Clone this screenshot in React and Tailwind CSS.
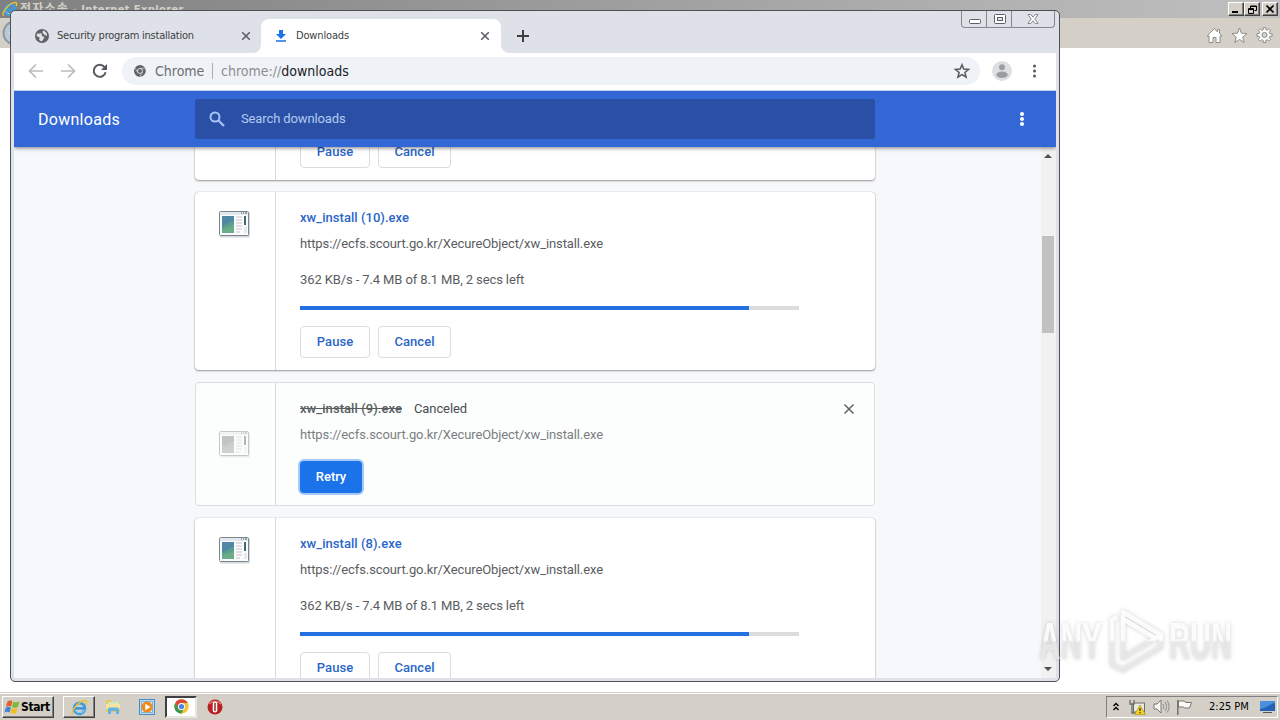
import React from "react";

const CELL = "font-['DejaVu_Sans_Condensed','DejaVu_Sans',sans-serif]";

function FileIcon({ faded }) {
  return (
    <svg width="32" height="28" viewBox="0 0 32 28" className={faded ? "opacity-45 grayscale" : ""}>
      <rect x="2" y="2.500" width="30" height="25" rx="1" fill="#d5d8da" />
      <rect x="1.500" y="1.500" width="29" height="24" rx="1" fill="#fbfcfd" stroke="#7b868e" />
      <rect x="2" y="2" width="28" height="3" fill="#e3e8ec" />
      <path d="M23 3h1M25 3h1M27 3h2" stroke="#41505c" />
      <rect x="4" y="6" width="12" height="17" fill="#59a08c" />
      <path d="M4 6h12v5c-4 0-6 4-12 5z" fill="#5088a6" />
      <path d="M4 20c4-3 8-2 12-6v9H4z" fill="#68ad88" />
      <path d="M18 7h6M18 10h6M18 13h6M18 16h6M18 19h6M18 22h4" stroke="#cdbfc5" />
      <path d="M27 6v9" stroke="#3c6b6b" strokeWidth="2" />
      <path d="M26 17h3v6h-3z" fill="#e6eaec" />
    </svg>
  );
}

function Button({ children, width }) {
  return (
    <div className={`${width} flex h-8 shrink-0 items-center justify-center rounded border border-[#dadce0] bg-white text-[13px] font-medium text-[#2a66c8]`}>
      <span className="tracking-[0.05px]">{children}</span>
    </div>
  );
}

function Actions() {
  return (
    <div className="flex gap-2">
      <Button width="w-[70px]">Pause</Button>
      <Button width="w-[73px]">Cancel</Button>
    </div>
  );
}

const URL_TEXT = "https://ecfs.scourt.go.kr/XecureObject/xw_install.exe";

function ActiveCard({ name }) {
  return (
    <div className="flex h-[178px] shrink-0 rounded bg-white shadow-[0_1px_2px_rgba(60,64,67,0.5),0_0_1px_rgba(60,64,67,0.4)]">
      <div className="flex w-[81px] justify-center border-r border-[#d8dadd] pt-[18px] pr-[2px]">
        <FileIcon />
      </div>
      <div className="flex flex-1 flex-col pt-4 pl-6 text-[13px] leading-5 text-[#5a5d61]">
        <div className="font-medium text-[#2a66c8]"><span className="tracking-[0.045px]">{name}</span></div>
        <div className="mt-1.5"><span className="tracking-[-0.104px]">{URL_TEXT}</span></div>
        <div className="mt-4"><span className="tracking-[-0.115px]">362 KB/s - 7.4 MB of 8.1 MB, 2 secs left</span></div>
        <div className="mt-4 mb-4 h-1 w-[499px] bg-[#dcdcdc]">
          <div className="h-1 w-[449px] bg-[#2470e0]" />
        </div>
        <Actions />
      </div>
    </div>
  );
}

function CanceledCard() {
  return (
    <div className="flex h-[124px] shrink-0 rounded border border-[#dadee0] bg-[#fbfefd]">
      <div className="flex w-20 items-center justify-center border-r border-[#d8dadd] pr-1">
        <FileIcon faded />
      </div>
      <div className="flex flex-1 flex-col pt-4 pl-6 text-[13px] leading-5 text-[#7b7e81]">
        <div className="flex justify-between pr-[19px]">
          <div className="flex gap-3 text-[#5a5d61]">
            <span className="font-medium tracking-[0.065px] line-through">xw_install (9).exe</span>
            <span className="tracking-[-0.1px] text-[#4a4d50]">Canceled</span>
          </div>
          <svg width="12" height="20" viewBox="0 0 12 20"><path d="M1.500 5.500l9 9M10.500 5.500l-9 9" stroke="#5f6368" strokeWidth="1.500" /></svg>
        </div>
        <div className="mt-1.5"><span className="tracking-[-0.104px]">{URL_TEXT}</span></div>
        <div className="mt-4 flex h-8 w-[62px] items-center justify-center rounded bg-[#1a73e8] font-medium text-white shadow-[0_0_0_2px_#a6caf7]">
          <span className="tracking-[-0.05px]">Retry</span>
        </div>
      </div>
    </div>
  );
}

function CloseX() {
  return <svg width="10" height="10" viewBox="0 0 10 10"><path d="M1.200 1.200l7.600 7.600M8.800 1.200l-7.600 7.600" stroke="#5c6066" strokeWidth="1.600" /></svg>;
}

function ChromeLogo({ size, mono }) {
  const c = mono ? ["#5f6368", "#5f6368", "#5f6368", "#5f6368", "#eef1f5"] : ["#d9483b", "#f3c431", "#3a9a55", "#4a86e8", "#fff"];
  return (
    <svg width={size} height={size} viewBox="0 0 24 24">
      <circle cx="12" cy="12" r="11.500" fill={c[1]} />
      <path d="M2 6.300A11.500 11.500 0 0 1 22 6.300H12A6 6 0 0 0 6.800 15z" fill={c[0]} />
      <path d="M2 6.300L7 15a6 6 0 0 0 8 2.200L11.500 23.500A11.500 11.500 0 0 1 2 6.300z" fill={c[2]} />
      {mono && <path d="M12 6.500h10M7.200 14.800L2.200 6.300M16.800 14.800L11.500 23.500" stroke="#eef1f5" strokeWidth="1.200" />}
      <circle cx="12" cy="12" r="5.600" fill={c[4]} />
      <circle cx="12" cy="12" r="4.200" fill={c[3]} />
    </svg>
  );
}

function IELogo({ size }) {
  return (
    <svg width={size} height={size} viewBox="0 0 20 20">
      <path d="M16 13A6.300 6.300 0 1 1 16.300 11H5.500" fill="none" stroke="#3d9be0" strokeWidth="3.400" />
      <path d="M15.700 13A6 6 0 0 1 5 13" fill="none" stroke="#8ad0f5" strokeWidth="1.200" />
      <path d="M2 18.500C-1 15 8 3.500 15 2c4-.8 4 2 2.500 4.500" fill="none" stroke="#eec331" strokeWidth="1.700" />
    </svg>
  );
}

function TabStrip() {
  return (
    <div className="flex h-[42px] shrink-0 items-end">
      <div className="flex h-[34px] w-[247px] items-center pl-[21px]">
        <svg width="14" height="14" viewBox="0 0 14 14">
          <circle cx="7" cy="7" r="7" fill="#5f6368" />
          <path d="M2 4.500C4 5 4.500 4 6.500 4.500L7 7 9.500 8 8.500 10 7 12.300C4 12 3.500 9.500 5 9L1.700 7z M8 1.500L7.500 3.500 9 5.500l3 1.500C12.500 4.500 10.500 2.200 8 1.500z" fill="#dfe2e8" />
        </svg>
        <span className="ml-2 w-[184px] pt-px text-[11px] tracking-[-0.24px] whitespace-nowrap text-[#3c4043]">Security program installation</span>
        <CloseX />
      </div>
      <div className="relative flex h-[34px] w-[240px] items-center rounded-t-lg bg-white pl-[14px]">
        <svg className="absolute bottom-0 -left-2" width="8" height="8"><path d="M8 0v8H0a8 8 0 0 0 8-8z" fill="#fff" /></svg>
        <svg className="absolute -right-2 bottom-0" width="8" height="8"><path d="M0 0v8h8a8 8 0 0 1-8-8z" fill="#fff" /></svg>
        <svg width="12" height="14" viewBox="0 0 12 14"><path d="M4 1h4v4h3L6 10 1 5h3z M1 11.300h10v1.500H1z" fill="#1a73e8" /></svg>
        <span className="ml-[9px] w-[184px] pt-px text-[11px] tracking-[-0.15px] text-[#3c4043]">Downloads</span>
        <CloseX />
      </div>
      <div className="flex h-[34px] items-center pl-4">
        <svg width="12" height="12" viewBox="0 0 12 12"><path d="M6 0v12M0 6h12" stroke="#3c4043" strokeWidth="2" /></svg>
      </div>
    </div>
  );
}

function Toolbar() {
  return (
    <div className="flex h-[38px] shrink-0 items-center border-b border-[#c4cdf0] bg-white pb-px pl-[14px]">
      <svg width="16" height="16" viewBox="0 0 16 16" fill="none" stroke="#b9bbbe" strokeWidth="1.700"><path d="M15 8H2M8 1.500L1.500 8 8 14.500" /></svg>
      <svg className="ml-4" width="16" height="16" viewBox="0 0 16 16" fill="none" stroke="#b9bbbe" strokeWidth="1.700"><path d="M1 8h13M8 1.500L14.500 8 8 14.500" /></svg>
      <svg className="ml-4" width="16" height="16" viewBox="0 0 16 16"><path d="M13.600 9.200A6 6 0 1 1 12.400 4" fill="none" stroke="#55595e" strokeWidth="2" /><path d="M15 1v6H9z" fill="#55595e" /></svg>
      <div className="ml-[14px] flex h-[28px] w-[858px] items-center rounded-full bg-[#eff2f6] pl-3">
        <ChromeLogo size={12} mono />
        <span className="ml-[9px] w-[57px] text-[14px] text-[#6a6e73]">Chrome</span>
        <span className="h-4 w-px bg-[#a9acb0]" />
        <span className="ml-2 flex-1 text-[14px] text-[#8c8f93]">chrome://<span className="text-[#202124]">downloads</span></span>
        <svg className="mr-[10px]" width="16" height="16" viewBox="0 0 16 16"><path d="M8 1.800l1.800 4.300 4.700.4-3.600 3 1.200 4.600L8 11.600l-4.100 2.500 1.200-4.600-3.600-3 4.700-.4z" fill="none" stroke="#55595e" strokeWidth="1.500" /></svg>
      </div>
      <svg className="ml-3" width="20" height="20" viewBox="0 0 20 20"><circle cx="10" cy="10" r="10" fill="#dedfe1" /><circle cx="10" cy="6.300" r="3" fill="#9b9da0" /><ellipse cx="10" cy="13.800" rx="5.700" ry="3.200" fill="#9b9da0" /></svg>
      <svg className="ml-5" width="5" height="14" viewBox="0 0 5 14" fill="#55595e"><circle cx="2.500" cy="2" r="1.500" /><circle cx="2.500" cy="7" r="1.500" /><circle cx="2.500" cy="12" r="1.500" /></svg>
    </div>
  );
}

function PageHeader() {
  return (
    <div className="z-10 flex h-14 shrink-0 items-center bg-[#3367d6] pl-6 text-white shadow-[0_1px_4px_rgba(0,0,0,0.5)]">
      <span className="w-[157px] pt-px text-[16px] tracking-[0.28px]">Downloads</span>
      <div className="flex h-10 w-[680px] items-center rounded-xs bg-[#2a50a6] pl-[14px]">
        <svg width="16" height="16" viewBox="0 0 16 16" fill="none" stroke="#a9c3f5"><circle cx="6" cy="6" r="4.500" strokeWidth="2" /><path d="M9.500 9.500l5.500 5.500" strokeWidth="2.200" /></svg>
        <span className="ml-4 text-[13px] tracking-[-0.12px] text-[#b4c8f0]">Search downloads</span>
      </div>
      <svg className="ml-[144px]" width="6" height="16" viewBox="0 0 6 16" fill="#fff"><circle cx="3" cy="3" r="2" /><circle cx="3" cy="8" r="2" /><circle cx="3" cy="13" r="2" /></svg>
    </div>
  );
}

function ChromeWindow() {
  return (
    <div className="absolute top-[10px] left-[10px] flex h-[672px] w-[1050px] flex-col rounded-[5px] border border-[#4d5054] bg-[#dee1e8] px-[3px] pb-[3px]">
      <div className="absolute top-0 right-1 flex h-[17px] w-[94px] rounded-b border-x border-b border-[#85888f]">
        <div className="flex w-[25px] items-center justify-center border-r border-[#85888f] pt-[4px] pl-px">
          <svg width="12" height="5"><rect x=".5" y=".5" width="11" height="4" rx="1" fill="#fff" stroke="#5b5f68" /></svg>
        </div>
        <div className="flex w-[25px] items-center justify-center border-r border-[#85888f] pl-px">
          <svg width="12" height="10"><rect x=".5" y=".5" width="11" height="9" rx="1" fill="#fff" stroke="#5b5f68" /><rect x="3.500" y="3.500" width="5" height="3" fill="#dee1e8" stroke="#5b5f68" /></svg>
        </div>
        <div className="flex flex-1 items-center justify-center">
          <svg width="12" height="10" viewBox="0 0 13 11"><path d="M1 .5h3l2.500 3 2.500-3h3L8.500 5.500l3.500 5H9l-2.500-3-2.500 3H1l3.500-5z" fill="#fff" stroke="#6d717a" strokeWidth=".9" /></svg>
        </div>
      </div>
      <div className={`${CELL} flex flex-col`}>
        <TabStrip />
        <Toolbar />
      </div>
      <div className="flex min-h-0 flex-1 flex-col overflow-hidden bg-[#f5f8fc] font-['Roboto',sans-serif]">
        <PageHeader />
        <div className="flex min-h-0 flex-1">
          <div className="flex min-w-0 flex-1 pl-[177px]">
            <div className="flex w-[688px] flex-col gap-3 overflow-hidden bg-[#f7f8f9] px-1">
              <div className="flex h-[33px] shrink-0 rounded-b bg-white shadow-[0_1px_2px_rgba(60,64,67,0.5),0_0_1px_rgba(60,64,67,0.4)]">
                <div className="w-[81px] border-r border-[#d8dadd]" />
                <div className="flex items-end pb-3 pl-6"><Actions /></div>
              </div>
              <ActiveCard name="xw_install (10).exe" />
              <CanceledCard />
              <ActiveCard name="xw_install (8).exe" />
            </div>
          </div>
          <div className="flex w-[15px] flex-col items-center bg-[#f1f1f1] pt-[6px] pr-px pb-[6px]">
            <svg width="8" height="5"><path d="M0 5l4-4 4 4z" fill="#505050" /></svg>
            <div className="mt-[78px] h-[97px] w-3 bg-[#c1c1c1]" />
            <svg className="mt-auto" width="8" height="5"><path d="M0 0l4 4 4-4z" fill="#505050" /></svg>
          </div>
        </div>
      </div>
    </div>
  );
}

const RAISED = "border border-t-white border-l-white border-r-[#404040] border-b-[#404040] shadow-[inset_-1px_-1px_0_#808080]";

function ExplorerWindow() {
  return (
    <div className="flex flex-1 flex-col bg-white">
      <div className="flex h-[18px] items-center justify-between bg-linear-to-r from-[#808080] to-[#c0c0c0] pr-[2px] pl-[2px]">
        <div className="flex items-center gap-[2px]">
          <IELogo size={16} />
          <span className="pt-px text-[11px] leading-[18px] font-bold tracking-[0.4px] whitespace-nowrap text-[#d4d0c8] font-['DejaVu_Sans_Condensed','Noto_Sans_CJK_KR',sans-serif]"><span className="text-[12px] tracking-[1.200px]">전자소송</span> - Internet Explorer</span>
        </div>
        <div className="flex">
          <div className={`${RAISED} flex h-[14px] w-4 items-end bg-[#d4d0c8] pb-[2px] pl-[3px]`}><div className="h-[2px] w-[6px] bg-black" /></div>
          <div className={`${RAISED} flex h-[14px] w-4 items-center justify-center bg-[#d4d0c8]`}>
            <svg width="9" height="9" fill="none" stroke="#000"><path d="M2.500 3V1h6v4.500H6.500M2.500 1.500h6" /><path d="M.5 3.500h5v5h-5zM.5 4.500h5" /></svg>
          </div>
          <div className={`${RAISED} ml-[2px] flex h-[14px] w-4 items-center justify-center bg-[#d4d0c8]`}>
            <svg width="8" height="8"><path d="M.5.5l7 7M7.500.5l-7 7" stroke="#000" strokeWidth="1.600" /></svg>
          </div>
        </div>
      </div>
      <div className="flex h-[30px] items-center justify-between bg-[#d4d0c8] pr-[7px] pl-[2px]">
        <svg width="26" height="26"><circle cx="13" cy="13" r="11.500" fill="#b9c9d8" stroke="#8d969e" strokeWidth="2" /><path d="M13 7l-6 6 6 6" fill="#fff" /></svg>
        <div className="flex items-center gap-2 pt-[5px]">
          <svg width="17" height="17" viewBox="0 0 17 17"><path d="M8.500 1.500L1 9h2v6.500h4v-5h3v5h4V9h2l-2.500-2.500V2.500h-2V5z" fill="#fff" stroke="#8f8e8b" /></svg>
          <svg width="17" height="17" viewBox="0 0 17 17"><path d="M8.500 1l2 5.200 5.500.3-4.300 3.500 1.500 5.500-4.700-3.100-4.700 3.100 1.500-5.500L1 6.500l5.500-.3z" fill="#fff" stroke="#8f8e8b" /></svg>
          <svg width="17" height="17" viewBox="0 0 17 17">
            <path d="M7.200.7h2.600v2l1.500.6 1.500-1.400 1.800 1.800-1.400 1.500.6 1.500h2.300v2.600h-2.300l-.6 1.500 1.400 1.500-1.800 1.800-1.500-1.400-1.500.6v2.200H7.200v-2.200l-1.500-.6-1.500 1.400-1.800-1.800 1.400-1.500-.6-1.500H.9V6.700h2.300l.6-1.500-1.400-1.500 1.800-1.800 1.500 1.400 1.500-.6z" fill="#fff" stroke="#8f8e8b" />
            <circle cx="8.500" cy="8" r="2.600" fill="#d4d0c8" stroke="#8f8e8b" />
          </svg>
        </div>
      </div>
    </div>
  );
}

function Taskbar() {
  return (
    <div className={`${CELL} flex h-[28px] shrink-0 items-center border-t border-[#d4d0c8] bg-[#d4d0c8] pr-[2px] pl-[2px] shadow-[inset_0_1px_0_#fff]`}>
      <div className={`${RAISED} flex h-[22px] w-[52px] items-center pl-px`}>
        <svg width="17" height="16" viewBox="0 0 17 16">
          <path d="M3.500 2.500C5.500 1 7 1.500 8.500 2.300L7.200 7.500C5.500 6.700 4 6.700 2 7.800z" fill="#e2602a" />
          <path d="M9.300 2.700c2 1 4 .9 6.200-.4L14 7.700c-2 1.300-4 1.300-6 .3z" fill="#7db83a" />
          <path d="M1.700 8.700c2-1.200 3.500-1.100 5.200-.3l-1.300 5c-1.700-.9-3.300-.9-5.200.2z" fill="#3f86d6" />
          <path d="M7.700 8.900c2 1 4 .9 6-.4l-1.400 5.400c-2 1.300-4 1.200-6-.1z" fill="#f2bd2b" />
        </svg>
        <span className="pt-px text-[12px] font-bold tracking-[-0.4px] text-black">Start</span>
      </div>
      <div className={`${RAISED} ml-[9px] flex h-[22px] w-[32px] items-center justify-center pt-px pl-px`}><IELogo size={17} /></div>
      <svg className="ml-[10px]" width="17" height="17" viewBox="0 0 17 17">
        <path d="M1 2h5l1 2h8v10H1z" fill="#e9c860" /><path d="M3 4h11v4H3z" fill="#cfe8c4" /><path d="M1 6h14v5H1z" fill="#f6e3a0" /><path d="M3 16v-5c0-1 1-1.500 2-1.500h7c1 0 2 .5 2 1.500v5h-3v-3H6v3z" fill="#62b4e4" />
      </svg>
      <svg className="ml-[17px]" width="16" height="16" viewBox="0 0 16 16">
        <rect x=".5" y=".5" width="15" height="15" fill="#b9dcf5" stroke="#4b8cc4" /><rect x="2.500" y="2.500" width="11" height="11" fill="#d9ecf8" stroke="#7fb2d8" /><circle cx="8" cy="8" r="5.500" fill="#f08a1c" /><path d="M6.300 4.800L11.500 8l-5.200 3.200z" fill="#fff" />
      </svg>
      <div className="ml-[10px] flex h-[22px] w-[32px] items-center justify-center border-2 border-t-[#404040] border-r-[#e8e6e1] border-b-[#e8e6e1] border-l-[#404040] bg-white"><ChromeLogo size={15} /></div>
      <svg className="mt-px ml-[10px]" width="16" height="16" viewBox="0 0 16 16"><circle cx="8" cy="8" r="7.500" fill="#b81f20" /><path d="M2 5a7 5 0 0 1 12 0" fill="none" stroke="#e57b74" strokeWidth="1.500" /><rect x="5.700" y="2.500" width="4.600" height="11" rx="2.300" fill="#fff" /><rect x="7.300" y="3.700" width="1.400" height="8.600" rx=".7" fill="#8f1618" /></svg>
      <div className="ml-auto flex h-[22px] w-[172px] items-center border border-t-[#808080] border-r-white border-b-white border-l-[#808080] pl-[6px]">
        <svg width="6" height="9" fill="none" stroke="#000" strokeWidth="1.400"><path d="M.5 4L3 1.500 5.500 4M.5 8L3 5.500 5.500 8" /></svg>
        <svg className="ml-[10px]" width="17" height="16" viewBox="0 0 17 16"><rect x="4.500" y="4" width="11" height="9" fill="#e9e9e4" stroke="#6e6e68" /><path d="M1 1v4h4V1M3 5v9h6" fill="none" stroke="#6e6e68" strokeWidth="1.300" /><path d="M11 6l5.500 9.500h-11z" fill="#f6d21e" stroke="#a68a10" strokeWidth=".6" /><path d="M11 9v3M11 13v1.200" stroke="#222" strokeWidth="1.200" /></svg>
        <svg className="ml-[7px]" width="17" height="15" viewBox="0 0 17 15"><path d="M1 5h3l4-4v13l-4-4H1z" fill="#f7f7f5" stroke="#77756f" /><path d="M10 5c1 1.500 1 3.500 0 5M12 3c2 2.500 2 6.500 0 9M14 1.500c2.700 3.500 2.700 8.500 0 12" fill="none" stroke="#8b8984" /></svg>
        <svg className="ml-[6px]" width="17" height="16" viewBox="0 0 17 16"><path d="M2.500 2h6l1 1.500h6l-2 5.500h-5l-1-1h-5z" fill="#fafaf8" stroke="#77756f" /><path d="M1.800 1v15" stroke="#77756f" strokeWidth="1.600" /></svg>
        <span className="ml-4 w-[51px] pt-[2px] text-[11px] whitespace-nowrap text-black">2:25 PM</span>
        <svg width="15" height="14" viewBox="0 0 15 14"><path d="M0 1h15v10H0z" fill="#2463b6" /><path d="M0 1h15v2C9 4 8 8 0 9z" fill="#4c8fdc" /><path d="M3 12.500h9" stroke="#555" /></svg>
      </div>
    </div>
  );
}

function Watermark() {
  return (
    <svg className="absolute top-[600px] left-[1030px] drop-shadow-[0_0_2px_rgba(90,90,90,0.3)]" width="220" height="80" viewBox="0 0 220 80">
      <defs>
        <linearGradient id="wm" gradientUnits="userSpaceOnUse" x1="0" y1="0" x2="0" y2="80">
          <stop offset=".5" stopColor="#fff" stopOpacity=".9" />
          <stop offset=".53" stopColor="#e9e9e9" stopOpacity=".85" />
        </linearGradient>
      </defs>
      <g fill="url(#wm)" fontFamily="Liberation Sans" fontWeight="bold" fontSize="51">
        <text x="9" y="59" textLength="63" lengthAdjust="spacingAndGlyphs">ANY</text>
        <text x="139" y="59" textLength="63" lengthAdjust="spacingAndGlyphs">RUN</text>
      </g>
      <g fill="none" stroke="url(#wm)" strokeWidth="4.500" strokeLinejoin="round">
        <path d="M93 12l38 23-38 23z" />
        <path d="M87 17l-5 3v45l11 5 38-23V35" />
        <path d="M93 19l32 19" />
      </g>
    </svg>
  );
}

export default function App() {
  return (
    <div className="relative flex h-[720px] w-[1280px] flex-col overflow-hidden bg-white">
      <ExplorerWindow />
      <Taskbar />
      <ChromeWindow />
      <Watermark />
    </div>
  );
}
